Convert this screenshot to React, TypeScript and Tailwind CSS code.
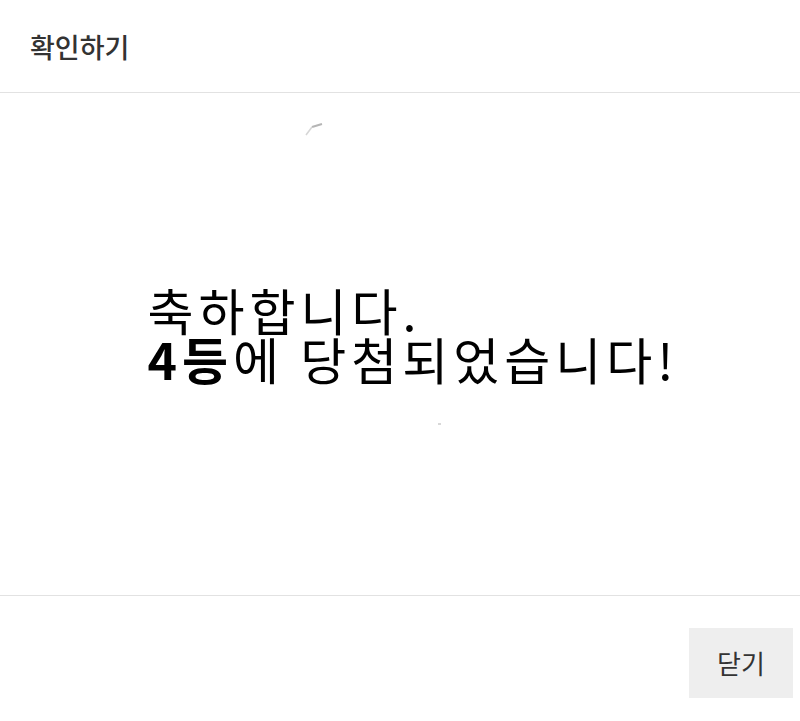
import React from 'react';

export default function App() {
  return (
    <div
      className="w-[800px] h-[721px] flex flex-col bg-white text-[#333]"
      style={{ fontFamily: '"Noto Sans CJK KR", "Noto Sans", sans-serif' }}
    >
      <header className="h-[93px] shrink-0 flex items-center px-[30px] border-b border-[#e2e2e2]">
        <h1 className="text-[27px] font-medium leading-none">확인하기</h1>
      </header>

      <main className="relative flex-1 flex items-center justify-center">
        <svg className="absolute left-[300px] top-[28px]" width="26" height="30" viewBox="0 0 26 30">
          <path d="M12 6 L22 3" stroke="#b5b5b5" strokeWidth="2" fill="none" />
          <path d="M12 6 L6 14" stroke="#d6d6d6" strokeWidth="1.5" fill="none" />
        </svg>
        <div className="absolute left-[438px] top-[330px] w-[3px] h-[2px] bg-[#d8d8d8]" />
        <div className="text-black text-[50px] leading-[49px] tracking-[5px] pl-[26px] pb-[20px]">
          <p>축하합니다.</p>
          <p>
            <span className="font-bold">4등</span>에 당첨되었습니다!
          </p>
        </div>
      </main>

      <footer className="h-[126px] shrink-0 border-t border-[#e2e2e2] flex justify-end items-start pt-[32px] pr-[7px]">
        <button className="w-[104px] h-[70px] bg-[#eeeeee] text-[26px] text-[#333] leading-none">
          닫기
        </button>
      </footer>
    </div>
  );
}
